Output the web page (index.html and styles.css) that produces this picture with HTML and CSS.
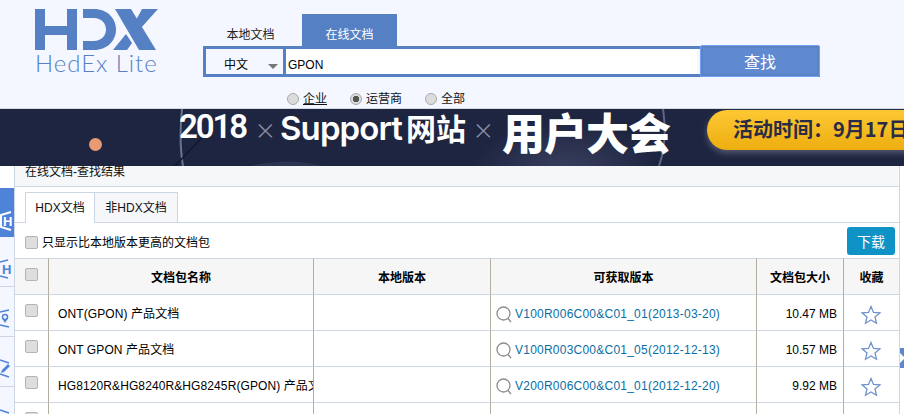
FILE: index.html
```html
<!DOCTYPE html>
<html lang="zh-CN">
<head>
<meta charset="utf-8">
<title>HedEx Lite</title>
<link rel="stylesheet" href="styles.css">
</head>
<body>
<div class="page">
  <header class="top">
    <div class="brand">
      <svg class="brand-mark" width="124" height="42" viewBox="35 9 124 42" aria-hidden="true">
        <path d="M35 9h10v17h22V9h10v41H67V35H45v15H35z"/>
        <path d="M83 9h11c13 0 22 9 22 20.500S107 50 94 50H83v-9h11c7 0 12-5 12-11.500S101 18 94 18H83z"/>
        <path d="M115 9h16l25 41h-17z"/>
        <path d="M142 9h16l-18 20-5-7z"/>
        <path d="M113 50l13-16 6 9-5 7z"/>
      </svg>
      <div class="brand-name">HedEx Lite</div>
    </div>
    <div class="finder">
      <div class="source-tabs">
        <div class="source-tab">本地文档</div>
        <div class="source-tab source-tab-on">在线文档</div>
      </div>
      <div class="searchbox">
        <div class="lang"><span>中文</span><i class="lang-arrow"></i></div>
        <input class="query" type="text" value="GPON">
        <button class="go" type="button">查找</button>
      </div>
      <div class="scopes">
        <label class="scope"><input class="radio" type="radio" name="s"><span class="scope-hover">企业</span></label>
        <label class="scope"><input class="radio" type="radio" name="s" checked><span>运营商</span></label>
        <label class="scope"><input class="radio" type="radio" name="s"><span>全部</span></label>
      </div>
    </div>
  </header>

  <section class="banner">
    <i class="glow"></i>
    <i class="dot"></i>
    <svg class="arcs" width="904" height="57" viewBox="0 0 904 57" aria-hidden="true">
      <path d="M182 0c-2 20-2 40 1 57" fill="none" stroke="#6a7390" stroke-width="2"/>
      <path d="M175 57l34-36" fill="none" stroke="#12172b" stroke-width="1.500"/>
      <path d="M663 0c3 20 2 40-4 57" fill="none" stroke="#5d6582" stroke-width="2"/>
      <path d="M250 57c25-6 50-6 72 0z" fill="#2c3452"/>
    </svg>
    <div class="slogan">
      <span class="s-year">2018</span>
      <span class="s-x">×</span>
      <span class="s-site">Support<b>网站</b></span>
      <span class="s-x s-x2">×</span>
      <span class="s-meet">用户大会</span>
    </div>
    <div class="pill">活动时间：9月17日</div>
  </section>

  <div class="sheet">
    <nav class="rail">
      <a class="rail-item rail-on">
        <svg width="14" height="20" viewBox="0 0 14 20" aria-hidden="true"><path d="M11 1L1 4v12l10 3" fill="none" stroke="currentColor" stroke-width="2"/><text x="3" y="15" class="rail-h">H</text></svg>
      </a>
      <a class="rail-item">
        <svg width="14" height="20" viewBox="0 0 14 20" aria-hidden="true"><path d="M0 3l8-2M0 17l8 2" fill="none" stroke="currentColor" stroke-width="1.500"/><text x="2" y="15" class="rail-h">H</text></svg>
      </a>
      <a class="rail-item">
        <svg width="14" height="20" viewBox="0 0 14 20" aria-hidden="true"><path d="M0 3l9-2M0 16l9 2" fill="none" stroke="currentColor" stroke-width="1.500"/><circle cx="5" cy="8" r="2.500" fill="none" stroke="currentColor" stroke-width="1.500"/><path d="M2.500 10l2.500 4 2.500-4z" fill="currentColor"/></svg>
      </a>
      <a class="rail-item">
        <svg width="14" height="20" viewBox="0 0 14 20" aria-hidden="true"><path d="M0 1l9 3M0 15l9 3" fill="none" stroke="currentColor" stroke-width="1.500"/><path d="M1 14l1-3 6-6 2 2-6 6z" fill="currentColor"/></svg>
      </a>
      <a class="rail-item">
        <svg width="14" height="20" viewBox="0 0 14 20" aria-hidden="true"><path d="M0 1l9 3" fill="none" stroke="currentColor" stroke-width="1.500"/></svg>
      </a>
    </nav>

    <main class="results">
      <div class="band">在线文档-查找结果</div>
      <div class="doc-tabs">
        <div class="doc-tab doc-tab-on">HDX文档</div>
        <div class="doc-tab">非HDX文档</div>
      </div>
      <div class="tools">
        <label class="only"><input class="check" type="checkbox"><span>只显示比本地版本更高的文档包</span></label>
        <button class="dl" type="button">下载</button>
      </div>
      <table class="docs">
        <colgroup>
          <col class="c-check"><col class="c-name"><col class="c-local"><col class="c-avail"><col class="c-size"><col class="c-fav">
        </colgroup>
        <thead>
          <tr>
            <th><input class="check" type="checkbox"></th>
            <th>文档包名称</th>
            <th>本地版本</th>
            <th>可获取版本</th>
            <th>文档包大小</th>
            <th>收藏</th>
          </tr>
        </thead>
        <tbody>
          <tr>
            <td><input class="check" type="checkbox"></td>
            <td class="name">ONT(GPON) 产品文档</td>
            <td></td>
            <td class="ver"><svg class="lens" width="17" height="18" viewBox="0 0 17 18" aria-hidden="true"><circle cx="7.500" cy="7.500" r="6.500"/><path d="M12 12.500l3 3.500"/></svg><a>V100R006C00&amp;C01_01(2013-03-20)</a></td>
            <td class="size">10.47 MB</td>
            <td class="fav"><svg class="star" width="20" height="20" viewBox="0 0 20 20" aria-hidden="true"><path d="M10 1.500l2.500 5.900 6.300.5-4.800 4.100 1.500 6.200L10 15l-5.500 3.200L6 12 1.200 7.900l6.300-.5z"/></svg></td>
          </tr>
          <tr>
            <td><input class="check" type="checkbox"></td>
            <td class="name">ONT GPON 产品文档</td>
            <td></td>
            <td class="ver"><svg class="lens" width="17" height="18" viewBox="0 0 17 18" aria-hidden="true"><circle cx="7.500" cy="7.500" r="6.500"/><path d="M12 12.500l3 3.500"/></svg><a>V100R003C00&amp;C01_05(2012-12-13)</a></td>
            <td class="size">10.57 MB</td>
            <td class="fav"><svg class="star" width="20" height="20" viewBox="0 0 20 20" aria-hidden="true"><path d="M10 1.500l2.500 5.900 6.300.5-4.800 4.100 1.500 6.200L10 15l-5.500 3.200L6 12 1.200 7.900l6.300-.5z"/></svg></td>
          </tr>
          <tr>
            <td><input class="check" type="checkbox"></td>
            <td class="name">HG8120R&amp;HG8240R&amp;HG8245R(GPON) 产品文档</td>
            <td></td>
            <td class="ver"><svg class="lens" width="17" height="18" viewBox="0 0 17 18" aria-hidden="true"><circle cx="7.500" cy="7.500" r="6.500"/><path d="M12 12.500l3 3.500"/></svg><a>V200R006C00&amp;C01_01(2012-12-20)</a></td>
            <td class="size">9.92 MB</td>
            <td class="fav"><svg class="star" width="20" height="20" viewBox="0 0 20 20" aria-hidden="true"><path d="M10 1.500l2.500 5.900 6.300.5-4.800 4.100 1.500 6.200L10 15l-5.500 3.200L6 12 1.200 7.900l6.300-.5z"/></svg></td>
          </tr>
          <tr>
            <td><input class="check" type="checkbox"></td>
            <td></td><td></td><td></td><td></td><td></td>
          </tr>
        </tbody>
      </table>
    </main>
    <div class="handle"><i></i></div>
  </div>
</div>
</body>
</html>
```

FILE: styles.css
```css
* { box-sizing: border-box; }
html, body { margin: 0; padding: 0; overflow: hidden; }
body {
  font: 12px/16px "Liberation Sans", "Noto Sans CJK SC", sans-serif;
  color: #000;
  background: #fff;
}
.page { width: 904px; height: 414px; overflow: hidden; }

/* header */
.top {
  height: 109px;
  display: flex;
  overflow: hidden;
  background: #f4f7ff;
  border-bottom: 1px solid #d3dae6;
}
.brand { width: 168px; margin-left: 35px; padding-top: 9px; flex: none; }
.brand-mark { display: block; fill: #5580c4; }
.brand-name {
  margin-top: 0;
  font: 300 24px/24px Lato, "Liberation Sans", sans-serif;
  letter-spacing: .95px;
  color: #5580c4;
  white-space: nowrap;
}
.finder { width: 617px; padding-top: 14px; flex: none; }
.source-tabs { display: flex; height: 32px; }
.source-tab { width: 99px; padding: 13px 4px 0 0; text-align: center; color: #222; }
.source-tab-on { width: 95px; padding-right: 0; background: #5580c4; color: #fff; }
.searchbox {
  display: flex;
  align-items: flex-start;
  height: 31px;
  border: 3px solid #5580c4;
}
.lang {
  flex: none;
  width: 80px;
  height: 25px;
  padding: 7px 0 0 18px;
  border-right: 3px solid #5580c4;
  display: flex;
  align-items: flex-start;
  background: #f4f7ff;
}
.lang span { margin-top: 1px; }
.lang-arrow {
  margin: 8px 0 0 20px;
  border: 5px solid transparent;
  border-top: 5px solid #777;
  border-bottom: 0;
}
.query {
  flex: 1;
  min-width: 0;
  height: 25px;
  padding: 6px 2px 0;
  border: 0;
  outline: 0;
  background: #fff;
  font: 12px "Liberation Sans", sans-serif;
  color: #000;
}
.go {
  flex: none;
  width: 120px;
  height: 32px;
  margin: -4px -3px 0 3px;
  padding: 0;
  border: 1px solid #74a0f2;
  border-radius: 2px;
  box-shadow: inset 0 0 0 2px #5a83c6;
  background: #5f8ad0;
  color: #fff;
  font: 16px/20px "Noto Sans CJK SC", sans-serif;
}
.scopes { display: flex; margin: 14px 0 0 84px; }
.scope { display: flex; align-items: center; height: 16px; margin-right: 23px; }
.scope span { color: #111; }
.scope-hover { text-decoration: underline; }
.radio {
  appearance: none;
  width: 12px;
  height: 12px;
  margin: 0 4px 0 0;
  border: 1px solid #a9a9a9;
  border-radius: 50%;
  background: #dcdcdc;
}
.radio:checked { background: radial-gradient(circle, #555 0 3px, #dcdcdc 3.500px); }

/* banner */
.banner {
  position: relative;
  height: 57px;
  overflow: hidden;
  background: #1e2540;
}
.glow {
  position: absolute;
  left: 470px;
  top: 10px;
  width: 190px;
  height: 90px;
  background: radial-gradient(ellipse at 50% 60%, #3a4060, #1e254000 70%);
}
.dot {
  position: absolute;
  left: 89px;
  top: 29px;
  width: 13px;
  height: 13px;
  border-radius: 50%;
  background: #e89a72;
}
.arcs { position: absolute; left: 0; top: 0; }
.slogan {
  position: relative;
  display: flex;
  align-items: flex-start;
  padding-left: 179px;
  color: #fff;
  white-space: nowrap;
}
.s-year {
  margin-top: -2px;
  font: 600 33px/40px Roboto, sans-serif;
  letter-spacing: -2.100px;
}
.s-x {
  width: 20px;
  margin: 0 5px 0 9px;
  font: 200 32px/40px Inter, sans-serif;
  color: #8a90a6;
}
.s-x2 { margin: 0 0 0 7px; }
.s-site {
  margin-top: -2px;
  font: 600 33px/40px Inter, sans-serif;
  letter-spacing: -.900px;
}
.s-site b {
  margin-left: 4px;
  font: 700 30px/40px "Noto Sans CJK SC", sans-serif;
  letter-spacing: 0;
}
.s-meet {
  margin: -7px 0 0 9px;
  font: 900 43px/58px "Noto Sans CJK SC", sans-serif;
  letter-spacing: -1px;
}
.pill {
  position: absolute;
  left: 707px;
  top: 1px;
  width: 240px;
  height: 40px;
  padding-left: 26px;
  border-radius: 20px;
  background: linear-gradient(#fdc834, #edae10);
  box-shadow: 0 3px 6px #ffffff40;
  color: #2a2b45;
  font: 700 20px/38px "Noto Sans CJK TC", "Noto Sans CJK SC", sans-serif;
  white-space: nowrap;
}

/* sheet */
.sheet { position: relative; display: flex; height: 248px; }
.rail {
  flex: none;
  width: 15px;
  padding-top: 22px;
  border-right: 1px solid #cdd6e4;
  background: linear-gradient(#fff 22px, #f4f7ff 22px);
}
.rail-item {
  display: block;
  height: 50px;
  padding-top: 22px;
  border-bottom: 1px solid #cdd6e4;
  color: #4f83d8;
  overflow: hidden;
}
.rail-item svg { display: block; }
.rail-on { height: 49px; padding-top: 23px; border-bottom: 0; background: #4f83d8; color: #fff; }
.rail-h { font: 700 13px "Liberation Sans", sans-serif; fill: currentColor; }
.results { flex: none; width: 885px; border-right: 1px solid #cdd6e4; }
.band {
  height: 21px;
  padding-left: 10px;
  border-bottom: 1px solid #cdd6e4;
  background: #f6f7f8;
  line-height: 13px;
  color: #111;
}
.doc-tabs {
  display: flex;
  height: 31px;
  margin-top: 5px;
  padding-left: 10px;
  border-bottom: 1px solid #cdd6e4;
}
.doc-tab {
  width: 83px;
  height: 30px;
  padding-top: 7px;
  border: 1px solid #cdd6e4;
  border-left: 0;
  border-bottom: 0;
  background: #f6f7f8;
  text-align: center;
  color: #111;
}
.doc-tab-on {
  width: 70px;
  height: 31px;
  border-left: 1px solid #cdd6e4;
  background: #fff;
}
.tools {
  display: flex;
  align-items: flex-start;
  justify-content: space-between;
  height: 35px;
  padding: 4px 4px 0 10px;
}
.only { display: flex; align-items: flex-start; margin-top: 9px; }
.only .check { margin: 0 4px 0 0; }
.only span { margin-top: -1px; }
.check {
  appearance: none;
  display: block;
  width: 13px;
  height: 13px;
  margin: 0;
  border: 1px solid #b4b4b4;
  border-radius: 2px;
  background: #dedede;
}
.dl {
  width: 48px;
  height: 28px;
  padding: 0;
  border: 0;
  border-radius: 3px;
  background: #0f93c7;
  color: #fff;
  font: 14px/20px "Noto Sans CJK SC", sans-serif;
}
.docs {
  width: 884px;
  table-layout: fixed;
  border-collapse: separate;
  border-spacing: 0;
}
.c-check { width: 33px; }
.c-name { width: 265px; }
.c-local { width: 177px; }
.c-avail { width: 266px; }
.c-size { width: 87px; }
.c-fav { width: 56px; }
.docs th, .docs td {
  padding: 0;
  border-bottom: 1px solid #cdd6e4;
  border-left: 1px solid #b4aea0;
  vertical-align: top;
  overflow: hidden;
  white-space: nowrap;
}
.docs th:first-child, .docs td:first-child { border-left: 0; padding: 9px 0 0 10px; }
.docs th {
  height: 37px;
  padding-top: 11px;
  border-top: 1px solid #cdd6e4;
  background: #f6f6f6;
  font-weight: 700;
  text-align: center;
}
.docs td { height: 36px; padding-top: 11px; }
.name { padding-left: 9px !important; letter-spacing: .1px; }
.ver { padding-left: 5px !important; }
.ver a { color: #0a6ea5; margin-left: 2px; vertical-align: top; letter-spacing: .23px; }
.lens { float: left; margin-top: 0; fill: none; stroke: #8c8c8c; stroke-width: 1.300; }
.size { text-align: right; padding-right: 6px !important; }
.fav { padding-top: 10px !important; padding-left: 17px !important; }
.star { display: block; fill: #fff; stroke: #7191cc; stroke-width: 1.300; }
.handle {
  position: absolute;
  left: 900px;
  top: 182px;
  width: 5px;
  height: 20px;
  background: #5f87c8;
  overflow: hidden;
}
.handle i {
  display: block;
  margin-top: 5px;
  border-left: 5px solid #fff;
  border-top: 5px solid transparent;
  border-bottom: 5px solid transparent;
  width: 0;
}
```
